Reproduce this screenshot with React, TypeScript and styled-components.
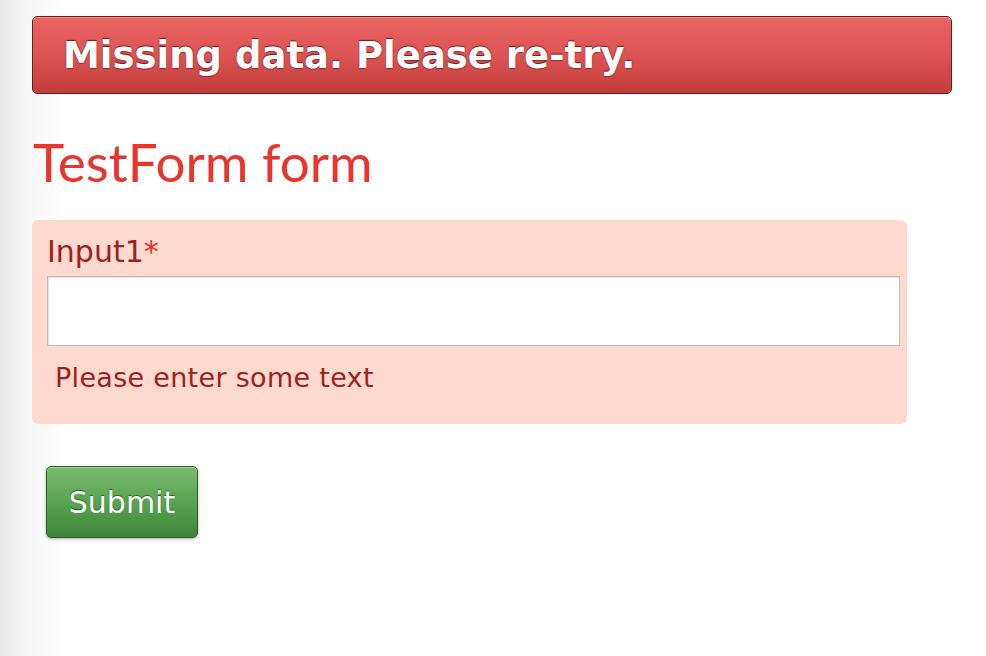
import React from "react";
import styled, { createGlobalStyle } from "styled-components";

const Global = createGlobalStyle`
  html, body { margin: 0; padding: 0; }
  body {
    background: linear-gradient(to right, #e9e9e9 0px, #f7f7f7 30px, #ffffff 70px);
    min-height: 656px;
    font-family: "DejaVu Sans", "Liberation Sans", sans-serif;
  }
`;

const Page = styled.div`
  padding: 16px 0 0 32px;
  display: flex;
  flex-direction: column;
`;

const Alert = styled.div`
  box-sizing: border-box;
  width: 920px;
  height: 78px;
  border: 1px solid #6e1a1a;
  border-radius: 5px;
  background: linear-gradient(to bottom, #e96463 0%, #dc5453 50%, #c23d3c 100%);
  box-shadow: inset 0 1px 0 rgba(255, 255, 255, 0.25);
  display: flex;
  align-items: center;
  padding: 0 0 0 30px;
  color: #fff;
  font-weight: bold;
  font-size: 37px;
  text-shadow: 0 -1px 1px rgba(90, 10, 10, 0.8), 0 1px 1px rgba(90, 10, 10, 0.5);
`;

const Title = styled.h1`
  margin: 40px 0 0 1px;
  font-family: Lato, "Open Sans", sans-serif;
  font-weight: 400;
  font-size: 53px;
  line-height: 56px;
  color: #e8352d;
`;

const Panel = styled.div`
  box-sizing: border-box;
  margin-top: 30px;
  width: 875px;
  height: 204px;
  background: #fddacd;
  border-radius: 6px;
  padding: 14px 7px 0 15px;
  display: flex;
  flex-direction: column;
`;

const Label = styled.label`
  font-size: 30px;
  line-height: 36px;
  color: #9b2222;
`;

const Req = styled.span`
  color: #e8352d;
`;

const Input = styled.input`
  box-sizing: border-box;
  margin-top: 6px;
  width: 853px;
  height: 70px;
  border: 1px solid #bdbdbd;
  box-shadow: inset 1px 1px 1px rgba(0, 0, 0, 0.12);
  background: #fff;
  outline: none;
`;

const ErrorText = styled.div`
  margin: 16px 0 0 8px;
  font-size: 27px;
  line-height: 32px;
  letter-spacing: 0.3px;
  color: #9b2222;
`;

const Submit = styled.button`
  box-sizing: border-box;
  margin: 42px 0 0 14px;
  width: 152px;
  height: 72px;
  border: 1px solid #2b6526;
  border-radius: 5px;
  background: linear-gradient(to bottom, #78bc6f 0%, #5aa352 50%, #3d8637 100%);
  box-shadow: 0 1px 3px rgba(0, 0, 0, 0.35), inset 0 1px 0 rgba(255, 255, 255, 0.3);
  color: #fff;
  font-family: "DejaVu Sans", sans-serif;
  font-size: 30px;
  padding: 0;
  text-shadow: 0 -1px 1px rgba(20, 60, 20, 0.7);
  align-self: flex-start;
  cursor: pointer;
`;

export default function App() {
  return (
    <>
      <Global />
      <Page>
        <Alert>Missing data. Please re-try.</Alert>
        <Title>TestForm form</Title>
        <Panel>
          <Label>
            Input1<Req>*</Req>
          </Label>
          <Input type="text" />
          <ErrorText>Please enter some text</ErrorText>
        </Panel>
        <Submit>Submit</Submit>
      </Page>
    </>
  );
}
